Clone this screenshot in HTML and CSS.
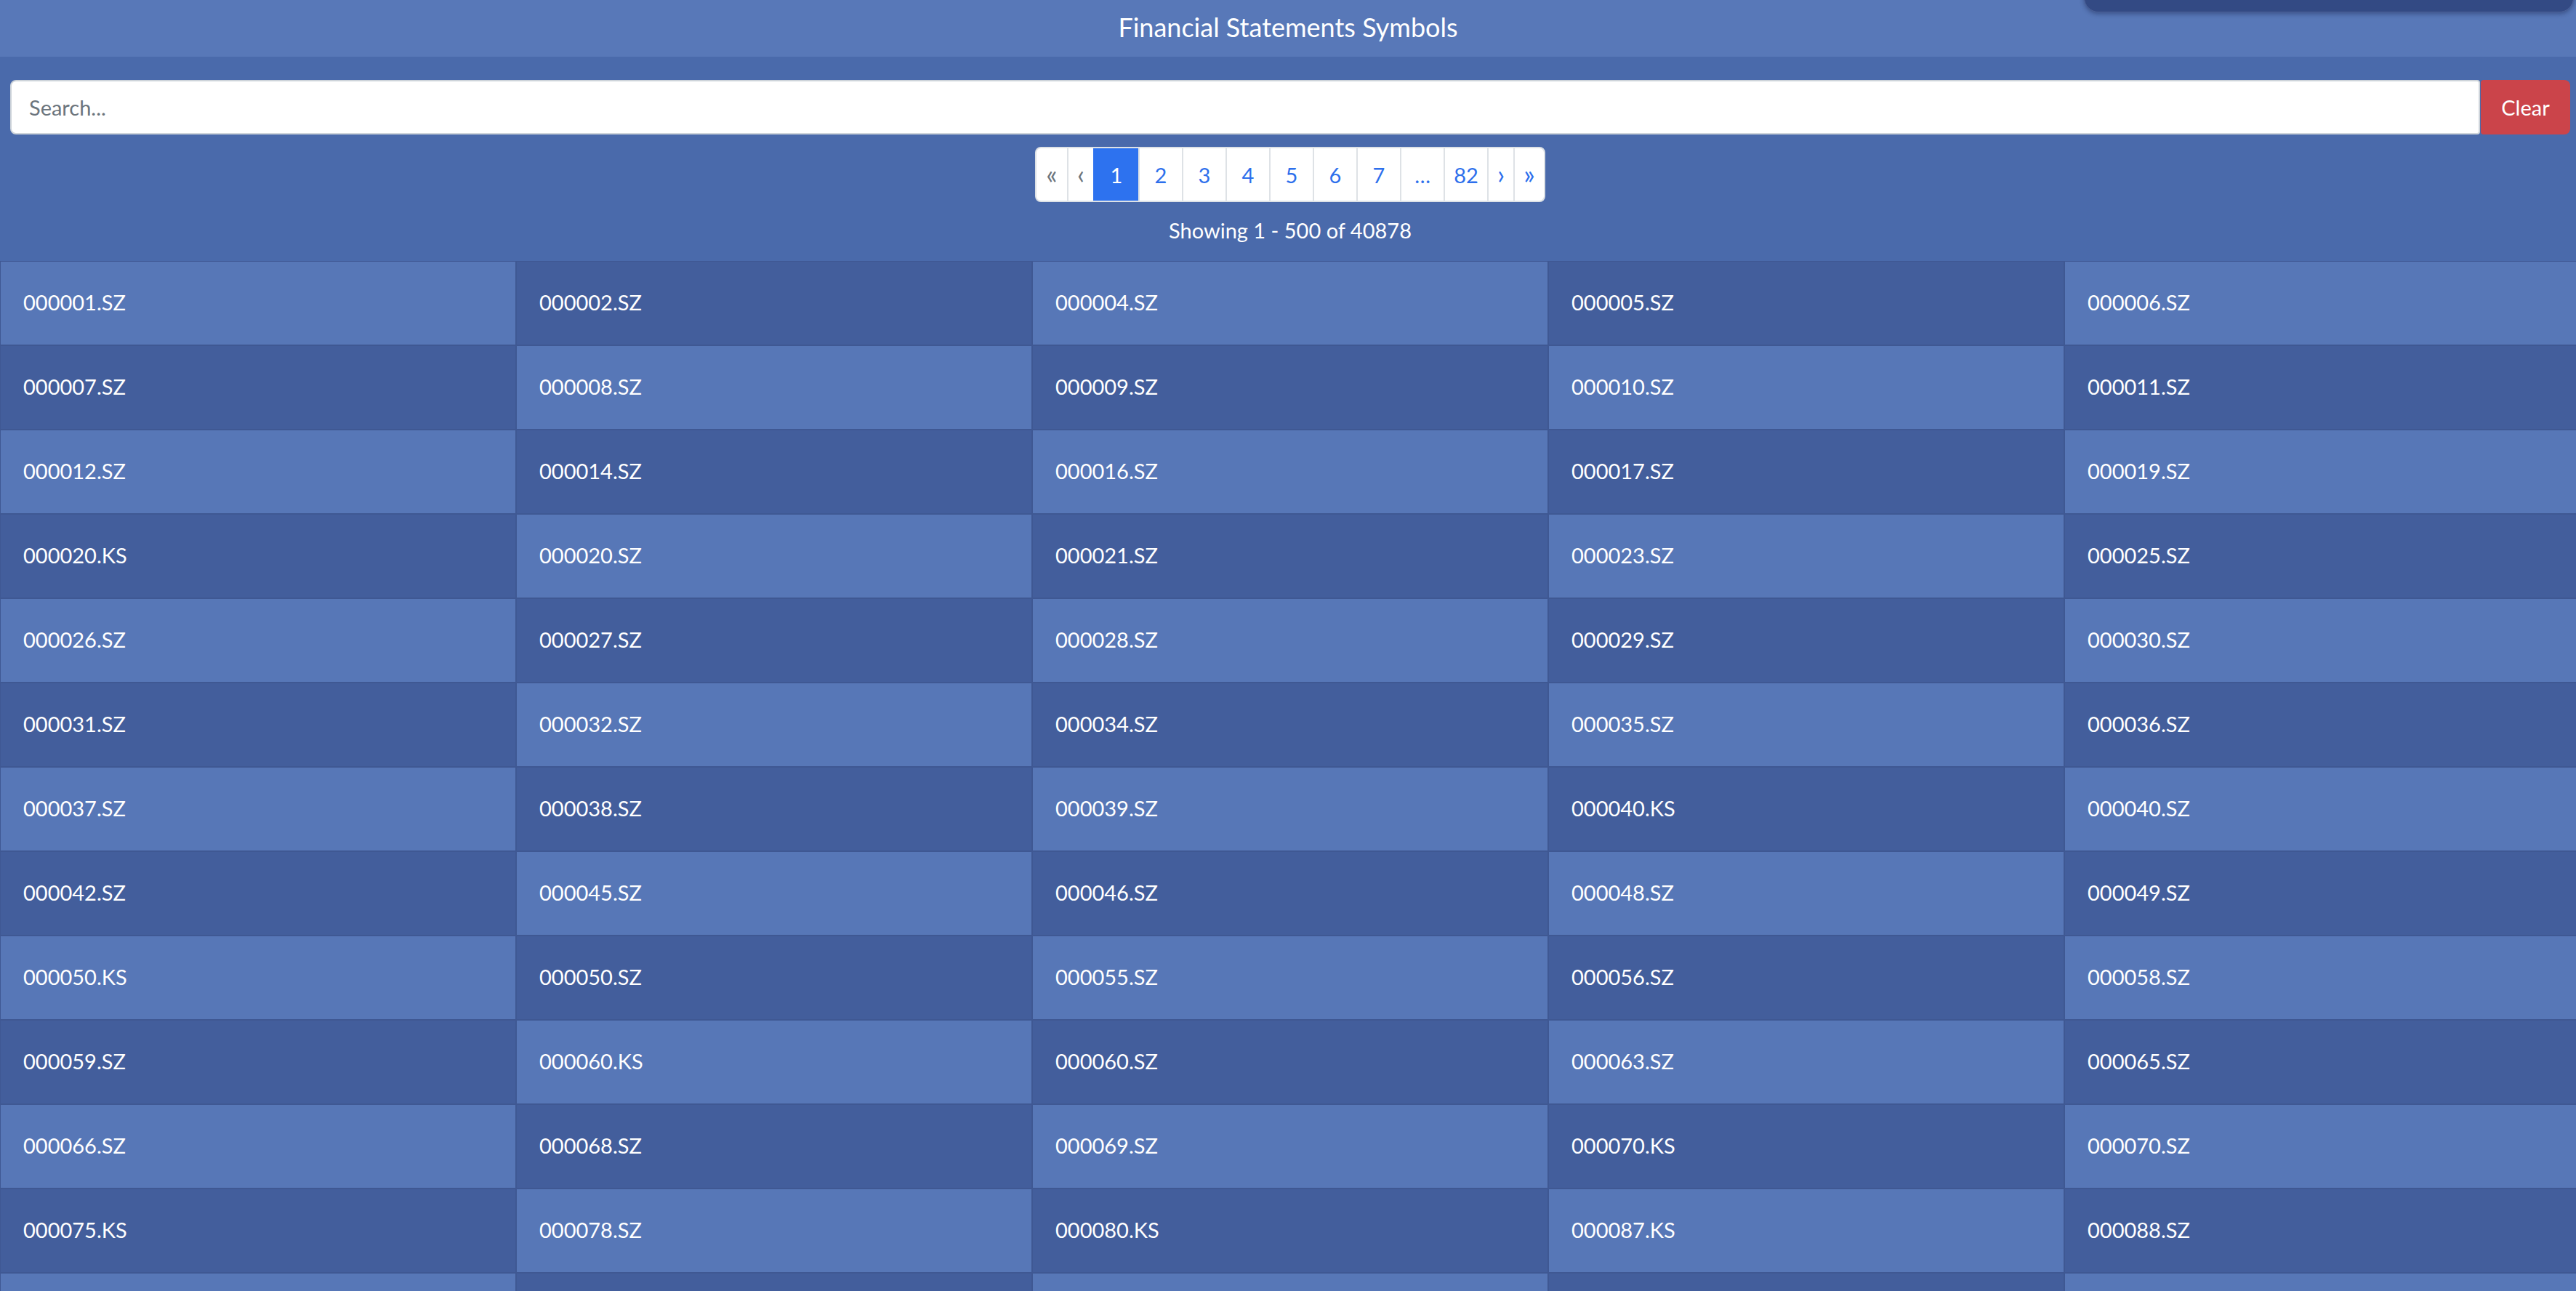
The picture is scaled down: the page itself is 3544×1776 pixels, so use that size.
FILE: index.html
```html
<!DOCTYPE html>
<html lang="en">
<head>
<meta charset="utf-8">
<title>Financial Statements Symbols</title>
<link rel="stylesheet" href="styles.css">
</head>
<body>
<header class="topbar">
  <div class="overlay-panel"></div>
  <h1 class="title">Financial Statements Symbols</h1>
</header>
<main class="controls">
  <div class="search-row">
    <input class="search-input" type="text" placeholder="Search...">
    <button class="clear-btn" type="button">Clear</button>
  </div>
  <div class="pager-wrap">
    <nav class="pager">
      <span class="pg pg-edge pg-disabled">«</span>
      <span class="pg pg-step pg-disabled">‹</span>
      <span class="pg pg-active">1</span>
      <span class="pg">2</span>
      <span class="pg">3</span>
      <span class="pg">4</span>
      <span class="pg">5</span>
      <span class="pg">6</span>
      <span class="pg">7</span>
      <span class="pg">…</span>
      <span class="pg">82</span>
      <span class="pg pg-step">›</span>
      <span class="pg pg-edge">»</span>
    </nav>
  </div>
  <p class="showing">Showing 1 - 500 of 40878</p>
</main>
<section class="symbols">
  <div class="cell">000001.SZ</div><div class="cell">000002.SZ</div><div class="cell">000004.SZ</div><div class="cell">000005.SZ</div><div class="cell">000006.SZ</div>
  <div class="cell">000007.SZ</div><div class="cell">000008.SZ</div><div class="cell">000009.SZ</div><div class="cell">000010.SZ</div><div class="cell">000011.SZ</div>
  <div class="cell">000012.SZ</div><div class="cell">000014.SZ</div><div class="cell">000016.SZ</div><div class="cell">000017.SZ</div><div class="cell">000019.SZ</div>
  <div class="cell">000020.KS</div><div class="cell">000020.SZ</div><div class="cell">000021.SZ</div><div class="cell">000023.SZ</div><div class="cell">000025.SZ</div>
  <div class="cell">000026.SZ</div><div class="cell">000027.SZ</div><div class="cell">000028.SZ</div><div class="cell">000029.SZ</div><div class="cell">000030.SZ</div>
  <div class="cell">000031.SZ</div><div class="cell">000032.SZ</div><div class="cell">000034.SZ</div><div class="cell">000035.SZ</div><div class="cell">000036.SZ</div>
  <div class="cell">000037.SZ</div><div class="cell">000038.SZ</div><div class="cell">000039.SZ</div><div class="cell">000040.KS</div><div class="cell">000040.SZ</div>
  <div class="cell">000042.SZ</div><div class="cell">000045.SZ</div><div class="cell">000046.SZ</div><div class="cell">000048.SZ</div><div class="cell">000049.SZ</div>
  <div class="cell">000050.KS</div><div class="cell">000050.SZ</div><div class="cell">000055.SZ</div><div class="cell">000056.SZ</div><div class="cell">000058.SZ</div>
  <div class="cell">000059.SZ</div><div class="cell">000060.KS</div><div class="cell">000060.SZ</div><div class="cell">000063.SZ</div><div class="cell">000065.SZ</div>
  <div class="cell">000066.SZ</div><div class="cell">000068.SZ</div><div class="cell">000069.SZ</div><div class="cell">000070.KS</div><div class="cell">000070.SZ</div>
  <div class="cell">000075.KS</div><div class="cell">000078.SZ</div><div class="cell">000080.KS</div><div class="cell">000087.KS</div><div class="cell">000088.SZ</div>
  <div class="cell"></div><div class="cell"></div><div class="cell"></div><div class="cell"></div><div class="cell"></div>
</section>
</body>
</html>
```
FILE: styles.css
```css
* { box-sizing: border-box; }

html, body {
  margin: 0;
  padding: 0;
}

body {
  background: #4a6aab;
  font-family: Lato, "Open Sans", sans-serif;
  color: #ffffff;
  overflow: hidden;
}

.topbar {
  position: relative;
  height: 78px;
  background: #5878b8;
  display: flex;
  align-items: center;
  justify-content: center;
  padding-bottom: 3px;
}

.overlay-panel {
  position: absolute;
  top: -20px;
  left: 2867px;
  width: 674px;
  height: 37px;
  background: #334a84;
  border: 1px solid #4b6098;
  border-radius: 0 0 20px 20px;
  box-shadow: 0 2px 6px rgba(20, 30, 70, 0.45);
}

.title {
  margin: 0;
  font-size: 36px;
  font-weight: 400;
  line-height: 1.2;
  color: #ffffff;
}

.controls {
  padding: 32px 8px 0 14px;
}

.search-row {
  display: flex;
  height: 75px;
}

.search-input {
  flex: 1;
  height: 75px;
  border: 2px solid #ced4da;
  border-radius: 8px 4px 4px 8px;
  padding: 0 24px;
  font-family: Lato, "Open Sans", sans-serif;
  font-size: 29px;
  color: #495057;
  background: #ffffff;
  outline: none;
}

.search-input::placeholder {
  color: #6c757d;
}

.clear-btn {
  width: 123px;
  height: 75px;
  margin-left: 1px;
  border: none;
  border-radius: 4px 8px 8px 4px;
  background: #cb444a;
  color: #ffffff;
  font-family: Lato, "Open Sans", sans-serif;
  font-size: 29px;
  padding: 0;
}

.pager-wrap {
  display: flex;
  justify-content: center;
  margin-top: 17px;
}

.pager {
  display: flex;
  height: 76px;
  background: #ffffff;
  border: 2px solid #dee2e6;
  border-radius: 8px;
  overflow: hidden;
}

.pg {
  width: 60px;
  display: flex;
  align-items: center;
  justify-content: center;
  font-size: 29px;
  color: #2d6fec;
  border-left: 2px solid #dee2e6;
}

.pg:first-child {
  border-left: none;
}

.pg-edge {
  width: 42px;
  font-size: 36px;
  padding-bottom: 3px;
}

.pg-step {
  width: 36px;
  font-size: 36px;
  padding-bottom: 3px;
}

.pg-disabled {
  color: #6c757d;
}

.pg-active {
  width: 62px;
  background: #2d72ef;
  color: #ffffff;
  border-left-color: #2d72ef;
}

.showing {
  margin: 19px 0 22px;
  text-align: center;
  font-size: 29px;
  line-height: 40px;
}

.symbols {
  display: grid;
  grid-template-columns: repeat(5, 710px);
}

.cell {
  height: 116px;
  display: flex;
  align-items: center;
  padding: 0 0 3px 31px;
  font-size: 29px;
  color: #ffffff;
  border: 1px solid #3f5893;
  background: #435e9c;
}

.cell:nth-child(odd) {
  background: #5777b7;
}
```
